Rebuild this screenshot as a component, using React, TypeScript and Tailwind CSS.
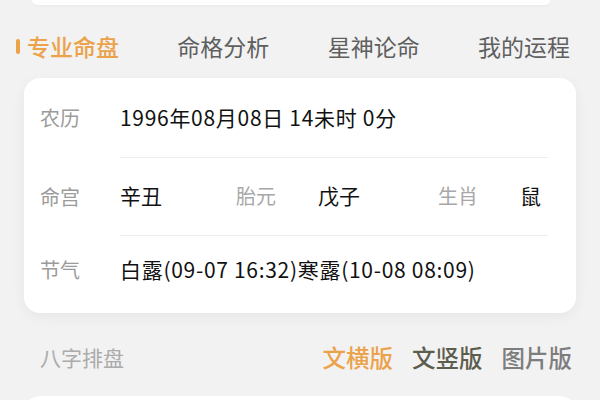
import React from "react";

const FONT = { fontFamily: '"Noto Sans CJK SC", "Noto Sans", sans-serif' };

const tabs = ["专业命盘", "命格分析", "星神论命", "我的运程"];

export default function App() {
  return (
    <div
      className="w-[600px] h-[400px] overflow-hidden bg-[#f2f2f2] flex flex-col"
      style={FONT}
    >
      {/* previous card edge */}
      <div className="ml-[32px] w-[518px] h-[5px] shrink-0 rounded-b-[10px] bg-white shadow-[0_1px_3px_rgba(0,0,0,0.04)]" />

      {/* tabs */}
      <div className="flex h-[73px] shrink-0 items-center justify-between pl-[16px] pr-[30px] pt-[10px] text-[23px] leading-none">
        {tabs.map((t, i) => (
          <div
            key={t}
            className={
              i === 0
                ? "flex items-center gap-[7px] font-medium text-[#eba24a]"
                : "text-[#5f5f5f]"
            }
          >
            {i === 0 && <span className="block h-[15px] w-[4px] rounded-full bg-[#eba24a]" />}
            <span>{t}</span>
          </div>
        ))}
      </div>

      {/* main card */}
      <div className="mx-[24px] h-[235px] shrink-0 rounded-[16px] bg-white pl-[16px] pr-[28px] shadow-[0_4px_14px_rgba(0,0,0,0.05)]">
        <div className="flex h-[80px] items-center">
          <div className="w-[80px] text-[20px] text-[#9b9b9b]">农历</div>
          <div className="flex h-full flex-1 items-center border-b border-[#ececec] text-[21px] tracking-[0.7px] text-[#111111]">
            1996年08月08日 14未时 0分
          </div>
        </div>
        <div className="flex h-[78px] items-center">
          <div className="w-[80px] text-[20px] text-[#9b9b9b]">命宫</div>
          <div className="flex h-full flex-1 items-center border-b border-[#ececec] pb-[2px] text-[21px]">
            <span className="w-[116px] text-[#111111]">辛丑</span>
            <span className="w-[82px] text-[20px] text-[#a8a8a8]">胎元</span>
            <span className="w-[120px] text-[#111111]">戊子</span>
            <span className="w-[82px] text-[20px] text-[#a8a8a8]">生肖</span>
            <span className="text-[#111111]">鼠</span>
          </div>
        </div>
        <div className="flex h-[70px] items-center pb-[2px]">
          <div className="w-[80px] text-[20px] text-[#9b9b9b]">节气</div>
          <div className="flex-1 text-[21px] tracking-[0.7px] text-[#111111]">
            白露(09-07 16:32)寒露(10-08 08:09)
          </div>
        </div>
      </div>

      {/* bottom header */}
      <div className="flex h-[83px] shrink-0 items-center justify-between pl-[40px] pr-[28px] pt-[6px]">
        <div className="text-[21px] text-[#ababab]">八字排盘</div>
        <div className="flex items-center gap-[19px] text-[23.5px] font-medium">
          <span className="text-[#eba24a]">文横版</span>
          <span className="text-[#5d5d4e]">文竖版</span>
          <span className="text-[#7d7d7d]">图片版</span>
        </div>
      </div>

      <div className="mx-[24px] h-[40px] shrink-0 rounded-t-[16px] bg-white" />
    </div>
  );
}
